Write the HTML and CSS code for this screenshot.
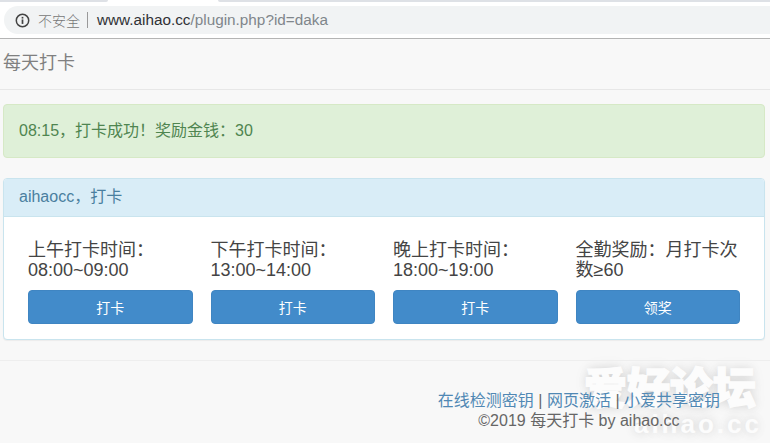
FILE: index.html
```html
<!DOCTYPE html>
<html lang="zh">
<head>
<meta charset="utf-8">
<title>每天打卡</title>
<link rel="stylesheet" href="styles.css">
</head>
<body>
<div class="chrome">
  <div class="tabs"><span class="tab-l"></span><span class="tab-r"></span></div>
  <div class="omnibox">
    <svg class="info" width="15" height="15" viewBox="0 0 14 14"><circle cx="7" cy="7" r="5.8" fill="none" stroke="#444" stroke-width="1.4"/><rect x="6.2" y="6" width="1.6" height="4.2" fill="#444"/><rect x="6.2" y="3.6" width="1.6" height="1.6" fill="#444"/></svg>
    <span class="insecure">不安全</span>
    <span class="sep"></span>
    <span class="url"><span class="host">www.aihao.cc</span>/plugin.php?id=daka</span>
  </div>
</div>
<header class="site-head">每天打卡</header>
<main class="content">
  <div class="alert">08:15，打卡成功！奖励金钱：30</div>
  <section class="panel">
    <div class="panel-head">aihaocc，打卡</div>
    <div class="panel-body">
      <div class="col"><p class="label">上午打卡时间：<br>08:00~09:00</p><button class="btn">打卡</button></div>
      <div class="col"><p class="label">下午打卡时间：<br>13:00~14:00</p><button class="btn">打卡</button></div>
      <div class="col"><p class="label">晚上打卡时间：<br>18:00~19:00</p><button class="btn">打卡</button></div>
      <div class="col"><p class="label">全勤奖励：月打卡次数≥60</p><button class="btn">领奖</button></div>
    </div>
  </section>
</main>
<div class="watermark"><div class="wm-big">爱好论坛</div><div class="wm-small">aihao.cc</div></div>
<footer class="foot">
  <div class="foot-inner">
    <div class="links"><a href="#">在线检测密钥</a> | <a href="#">网页激活</a> | <a href="#">小爱共享密钥</a></div>
    <div class="copy">©2019 每天打卡 by aihao.cc</div>
  </div>
</footer>
</body>
</html>
```
FILE: styles.css
```css
* { box-sizing: border-box; }
html, body { margin: 0; height: 100%; }
body {
  width: 770px;
  height: 443px;
  overflow: hidden;
  position: relative;
  background: #f8f8f8;
  color: #444;
  font-family: "Liberation Sans", "Noto Sans CJK SC", sans-serif;
  font-size: 14px;
}
.chrome {
  height: 39px;
  background: #fff;
  border-bottom: 1px solid #b4b4b4;
  padding-top: 6px;
  position: relative;
}
.tabs { position: absolute; top: 0; left: 0; right: 0; height: 2px; }
.tab-l, .tab-r { position: absolute; top: 0; height: 2px; background: #dee1e6; }
.tab-l { left: 0; width: 108px; border-radius: 0 0 6px 0; }
.tab-r { left: 218px; right: 0; border-radius: 0 0 0 6px; }
.omnibox {
  margin-left: 4px;
  height: 28px;
  background: #f1f3f4;
  border-radius: 14px 0 0 14px;
  display: flex;
  align-items: center;
  padding-left: 11px;
}
.info { flex: none; }
.insecure { margin-left: 8px; color: #777; font-size: 14px; font-weight: 300; }
.sep { width: 1px; height: 16px; background: #999; margin: 0 9px 0 7px; }
.url { color: #80868b; font-size: 15.3px; }
.host { color: #303134; }
.site-head {
  height: 51px;
  padding: 14px 3px 0;
  font-size: 18px;
  line-height: 20px;
  color: #808080;
  border-bottom: 1px solid #e7e7e7;
}
.content { padding: 14px 5px 0 3px; }
.alert {
  height: 54px;
  padding: 0 15px;
  line-height: 52px;
  font-size: 16px;
  color: #4f8550;
  background: #dff0d8;
  border: 1px solid #d6e9c6;
  border-radius: 4px;
}
.panel {
  margin-top: 20px;
  height: 162px;
  background: #fff;
  border: 1px solid #c9e4ee;
  border-radius: 4px;
  box-shadow: 0 1px 1px rgba(0,0,0,.05);
}
.panel-head {
  height: 38px;
  padding: 0 15px;
  line-height: 36px;
  font-size: 16px;
  color: #4a7f9f;
  background: #d9edf7;
  border-bottom: 1px solid #c9e4ee;
  border-radius: 3px 3px 0 0;
}
.panel-body {
  display: grid;
  grid-template-columns: repeat(4, 164.5px);
  column-gap: 18px;
  padding: 23px 0 0 24px;
}
.label {
  margin: 0 0 10px;
  height: 40px;
  font-size: 18px;
  line-height: 20px;
  color: #444;
}
.btn {
  display: block;
  width: 100%;
  height: 34px;
  padding: 0;
  font: inherit;
  color: #fff;
  background: #428bca;
  border: 1px solid #3f85c2;
  border-radius: 4px;
}
.foot {
  position: relative;
  margin-top: 20px;
  border-top: 1px solid #eee;
  padding-top: 30px;
  display: flex;
  justify-content: flex-end;
  padding-right: 50px;
  font-size: 16px;
  line-height: 20px;
  text-align: center;
  color: #666;
}
.links a { color: #5088b4; text-decoration: none; }
.links { color: #666; }
.watermark {
  position: absolute;
  left: 578px;
  top: 366px;
  width: 184px;
  text-align: center;
  color: #fcfcfc;
  text-shadow: 0 0 10px rgba(0,0,0,.12), 0 0 16px rgba(0,0,0,.08);
  pointer-events: none;
}
.wm-big {
  font-size: 43px;
  line-height: 46px;
  font-weight: 900;
  white-space: nowrap;
  -webkit-text-stroke: 1.5px #fcfcfc;
}
.wm-small {
  font-size: 26px;
  line-height: 20px;
  font-weight: 700;
  letter-spacing: 3px;
  margin-top: 2px;
  text-align: right;
}
```
